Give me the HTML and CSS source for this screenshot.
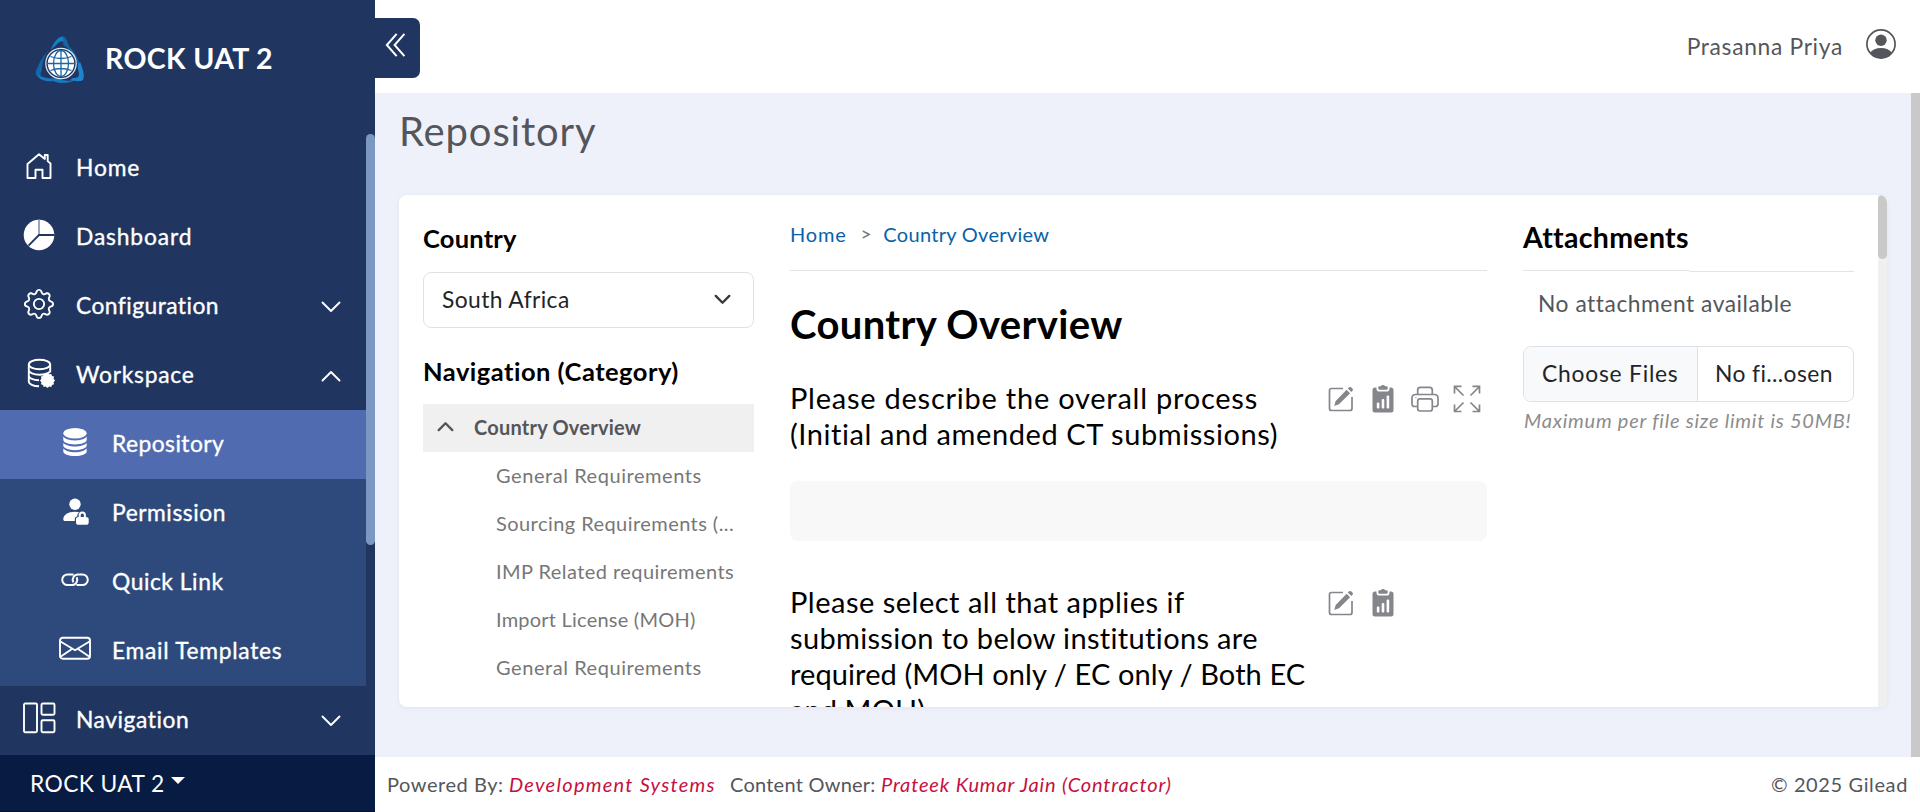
FILE: index.html
```html
<!DOCTYPE html>
<html lang="en">
<head>
<meta charset="utf-8">
<title>ROCK UAT 2 - Repository</title>
<link rel="stylesheet" href="styles.css">
</head>
<body>
<svg class="defs" aria-hidden="true">
  <symbol id="i-down" viewBox="0 0 20 12"><path d="M1.5 1.5 10 10l8.500-8.500" fill="none" stroke="currentColor" stroke-width="1.900" stroke-linecap="round" stroke-linejoin="round"/></symbol>
  <symbol id="i-down-bold" viewBox="0 0 20 12"><path d="M2 1.800 10 9.800l8-8" fill="none" stroke="currentColor" stroke-width="2.800" stroke-linecap="round" stroke-linejoin="round"/></symbol>
  <symbol id="i-edit" viewBox="0 0 28 28"><path d="M16 3.500H4.500a2 2 0 0 0-2 2v18a2 2 0 0 0 2 2h18.500a2 2 0 0 0 2-2V12" fill="none" stroke="currentColor" stroke-width="1.700"/><path d="M19.600 4.700l3.500 3.500L12 19.300 7.200 21l1.500-5zM20.800 3.500l1.300-1.200q1-.8 2 0l1.500 1.500q.8 1 0 2l-1.300 1.200z" fill="currentColor"/></symbol>
  <symbol id="i-clip" viewBox="0 0 28 28"><path fill-rule="evenodd" d="M7.500 2.500H6A2.500 2.500 0 0 0 3.500 5v20A2.500 2.500 0 0 0 6 27.500h16a2.500 2.500 0 0 0 2.500-2.500V5A2.500 2.500 0 0 0 22 2.500h-1.500v1.200a2.800 2.800 0 0 1-2.800 2.800h-7.400a2.800 2.800 0 0 1-2.800-2.800zM7.800 18.500q0-1 1-1h.6q1 0 1 1v4q0 1-1 1h-.6q-1 0-1-1zM12.700 15q0-1 1-1h.6q1 0 1 1v7.500q0 1-1 1h-.6q-1 0-1-1zM17.600 11.500q0-1 1-1h.6q1 0 1 1v11q0 1-1 1h-.6q-1 0-1-1z" fill="currentColor"/><path d="M9.300 2.300q0-1 1-1h1.500q.6-1.300 2.200-1.300t2.200 1.300h1.500q1 0 1 1v1.200q0 1.200-1.200 1.200h-7q-1.200 0-1.200-1.200z" fill="currentColor"/></symbol>
</svg>

<div class="app">
  <aside class="sidebar">
    <div class="brand">
      <svg class="logo" viewBox="0 0 48 48">
        <path d="M14.500 14C18 6 22 1 26 .5c4 0 5 5 6 9l-2-.5c-2-3.500-3.500-4-5.500-3.500-3 1-5 5-10 8.500z" fill="#1380cc"/>
        <path d="M26 .5c4 0 5 5 7.500 10.500C37 14 42 21 44 29l-3-1C39 19 33 12 27 9c1-3 .5-6-1-8.500z" fill="#1565a8"/>
        <path d="M44 26c3 7 5 14 3 18-3 2-9 1-13 0l3-2c5 0 6-1 6-4 0-3-2-6-1-10z" fill="#1f84cf"/>
        <path d="M14 13C9 17 6 27 6 34c-2 3-2 6 0 8-5-1-7-3-6-7 3-8 8-17 14-22z" fill="#1466ac"/>
        <path d="M1 38c7 5 15 5 21 4 7 4 14 3 19 1-7 5-18 5-24 2C10 46 2 44 1 38z" fill="#1778c0"/>
        <circle cx="25" cy="27.500" r="15.200" fill="#203660" stroke="#dbe7f3" stroke-width="1.200"/>
        <circle cx="25" cy="27.500" r="13.200" fill="#fff"/>
        <g fill="none" stroke="#1a66a6" stroke-width="1.300">
          <path d="M25 14.500v26M12 27.500h26M14.500 20.500q10.500 4 21 0M14.500 34.500q10.500-4 21 0"/>
          <ellipse cx="25" cy="27.500" rx="7.500" ry="13"/>
        </g>
      </svg>
      <span>ROCK UAT 2</span>
    </div>
    <div class="menu-wrap">
      <nav class="menu">
        <a class="item s12"><svg class="ico" viewBox="0 0 30 30"><path d="M15 3.200 3.500 13v14h8v-8.200h7V27h8V12.500l-2.800-2.400V4h-2.900v3.900z" fill="none" stroke="currentColor" stroke-width="1.900" stroke-linejoin="round"/></svg><span>Home</span></a>
        <a class="item s12"><svg class="ico" viewBox="0 0 30 30"><circle cx="15" cy="15" r="15.300" fill="#fff"/><path d="M15 -.5v15.500" stroke="#8f9cb5" stroke-width="1.800"/><path d="M30.500 15H15L4.500 25.700" fill="none" stroke="#203660" stroke-width="1.800"/></svg><span>Dashboard</span></a>
        <a class="item s8"><svg class="ico" viewBox="0 0 16 16" fill="currentColor"><path d="M8 4.754a3.246 3.246 0 1 0 0 6.492 3.246 3.246 0 0 0 0-6.492M5.754 8a2.246 2.246 0 1 1 4.492 0 2.246 2.246 0 0 1-4.492 0"/><path d="M9.796 1.343c-.527-1.790-3.065-1.790-3.592 0l-.094.319a.873.873 0 0 1-1.255.520l-.292-.160c-1.640-.892-3.433.902-2.540 2.541l.159.292a.873.873 0 0 1-.520 1.255l-.319.094c-1.790.527-1.790 3.065 0 3.592l.319.094a.873.873 0 0 1 .520 1.255l-.160.292c-.892 1.640.901 3.434 2.541 2.540l.292-.159a.873.873 0 0 1 1.255.520l.094.319c.527 1.790 3.065 1.790 3.592 0l.094-.319a.873.873 0 0 1 1.255-.520l.292.160c1.640.893 3.434-.902 2.540-2.541l-.159-.292a.873.873 0 0 1 .520-1.255l.319-.094c1.790-.527 1.790-3.065 0-3.592l-.319-.094a.873.873 0 0 1-.520-1.255l.160-.292c.893-1.640-.902-3.433-2.541-2.540l-.292.159a.873.873 0 0 1-1.255-.520zm-2.633.283c.246-.835 1.428-.835 1.674 0l.094.319a1.873 1.873 0 0 0 2.693 1.115l.291-.160c.764-.415 1.600.420 1.184 1.185l-.159.292a1.873 1.873 0 0 0 1.116 2.692l.318.094c.835.246.835 1.428 0 1.674l-.319.094a1.873 1.873 0 0 0-1.115 2.693l.160.291c.415.764-.420 1.600-1.185 1.184l-.291-.159a1.873 1.873 0 0 0-2.693 1.116l-.094.318c-.246.835-1.428.835-1.674 0l-.094-.319a1.873 1.873 0 0 0-2.692-1.115l-.292.160c-.764.415-1.600-.420-1.184-1.185l.159-.291A1.873 1.873 0 0 0 1.945 8.930l-.319-.094c-.835-.246-.835-1.428 0-1.674l.319-.094A1.873 1.873 0 0 0 3.060 4.377l-.160-.292c-.415-.764.420-1.600 1.185-1.184l.292.159a1.873 1.873 0 0 0 2.692-1.115z"/></svg><span>Configuration</span><svg class="arrow"><use href="#i-down"/></svg></a>
        <a class="item s11"><svg class="ico" viewBox="0 0 30 30"><g fill="none" stroke="currentColor" stroke-width="1.900"><ellipse cx="15.500" cy="6.500" rx="10.700" ry="4.700"/><path d="M4.800 6.500v17c0 2.500 4.500 4.700 10.200 4.700M26.200 6.500v8M4.800 12c0 2.700 4.800 4.700 10.700 4.700 4.500 0 8.300-1 10-2.700M4.800 17.800c0 2.500 4.500 4.300 10.200 4.400"/></g><path d="M23.500 15l1.700 1.300 2.100-.4.700 2 2 .7-.4 2.100L31 22.500l-1.400 1.700.4 2.100-2 .7-.7 2-2.100-.4-1.700 1.400-1.700-1.400-2.100.4-.7-2-2-.7.400-2.100-1.400-1.700 1.400-1.800-.4-2.100 2-.7.700-2 2.100.4z" fill="currentColor"/></svg><span>Workspace</span><svg class="arrow up"><use href="#i-down"/></svg></a>
        <div class="submenu">
          <a class="item active s8"><svg class="ico" viewBox="0 0 30 30" fill="currentColor"><ellipse cx="15" cy="6.200" rx="11.700" ry="5.200"/><path d="M3.300 9.500c2 2.600 6.500 3.900 11.700 3.900s9.700-1.300 11.700-3.900v3.300c0 2.700-5.200 4.700-11.700 4.700s-11.700-2-11.700-4.700zM3.300 16c2 2.300 6.500 3.500 11.700 3.500s9.700-1.200 11.700-3.500v2.600c0 2.600-5.200 4.600-11.700 4.600S3.300 21.200 3.300 18.600zM3.300 21.600c2 2.400 6.500 3.700 11.700 3.700s9.700-1.300 11.700-3.700v2.800C26.700 27 21.500 29 15 29S3.300 27 3.300 24.400z"/></svg><span>Repository</span></a>
          <a class="item s9"><svg class="ico" viewBox="0 0 30 30" fill="currentColor"><circle cx="15" cy="8.200" r="5.700"/><path d="M14.800 25H5.200c-1.300 0-1.900-.7-1.900-1.800 0-4.400 4.700-7.400 11.700-7.400 1.600 0 3 .2 4.300.5-1.500 1-2 2.300-2 4-1.600.3-2.500 1.500-2.500 2.800z"/><path fill-rule="evenodd" d="M18.700 21v-2a3.600 3.600 0 0 1 7.200 0v2c1.800 0 2.800.8 2.800 2.200v3.200c0 1.600-1 2.400-2.600 2.400h-7.600c-1.600 0-2.500-.8-2.500-2.400v-3.200c0-1.400.9-2.200 2.700-2.200zm2 0h3.200v-2a1.600 1.600 0 0 0-3.200 0z"/></svg><span>Permission</span></a>
          <a class="item s9"><svg class="ico" viewBox="0 0 30 30" fill="none" stroke="currentColor" stroke-width="2"><path d="M13.500 9.500H7.500a5.300 5.300 0 0 0 0 10.600H12a5.300 5.300 0 0 0 4.600-7.800M16.500 20.100h6a5.300 5.300 0 0 0 0-10.600H18a5.300 5.300 0 0 0-4.600 7.800"/></svg><span>Quick Link</span></a>
          <a class="item s10"><svg class="ico" viewBox="0 0 30 30" fill="none" stroke="currentColor" stroke-width="1.900"><rect x="0" y="3.700" width="30" height="21" rx="2.800"/><path d="M.5 7.500 15 16.200 29.500 7.500M.5 22.700l11.800-8M29.500 22.700l-11.800-8"/></svg><span>Email Templates</span></a>
        </div>
        <a class="item s9"><svg class="ico" viewBox="0 0 30 30" fill="none" stroke="currentColor" stroke-width="1.900"><rect x="0" y="0.500" width="13" height="28.800" rx="1.200"/><rect x="17.500" y="0.500" width="13" height="11.300" rx="1.200"/><rect x="17.500" y="17.300" width="13" height="12" rx="1.200"/></svg><span>Navigation</span><svg class="arrow"><use href="#i-down"/></svg></a>
      </nav>
      <div class="menu-scroll"><div class="menu-thumb"></div></div>
    </div>
    <div class="env"><span>ROCK UAT 2</span><i class="caret"></i></div>
  </aside>

  <div class="page">
    <header class="topbar">
      <button class="collapse"><svg viewBox="0 0 24 28"><path d="M12.700 1.800 2 14l10.700 12.200M21.200 1.800 10.500 14l10.700 12.200" fill="none" stroke="#fff" stroke-width="2.200"/></svg></button>
      <div class="user"><span>Prasanna Priya</span>
        <svg viewBox="0 0 30 30"><circle cx="15" cy="15" r="14.100" fill="none" stroke="currentColor" stroke-width="1.700"/><circle cx="15" cy="11.200" r="5.700" fill="currentColor"/><path d="M4 24c2.300-3.500 6-5 11-5s8.700 1.500 11 5c-2.800 3.300-6.500 5.200-11 5.200S6.800 27.300 4 24z" fill="currentColor"/></svg>
      </div>
    </header>

    <div class="body">
      <main class="content">
        <h1 class="page-title">Repository</h1>
        <section class="card">
          <div class="cols">
            <div class="left">
              <h2 class="label country">Country</h2>
              <div class="select"><span>South Africa</span><svg class="sel-arrow"><use href="#i-down-bold"/></svg></div>
              <h2 class="label navcat">Navigation (Category)</h2>
              <div class="cat"><svg class="cat-arrow"><use href="#i-down-bold"/></svg><span>Country Overview</span></div>
              <ul class="tree">
                <li>General Requirements</li>
                <li class="mid">Sourcing Requirements (...</li>
                <li class="mid">IMP Related requirements</li>
                <li class="narrow">Import License (MOH)</li>
                <li>General Requirements</li>
              </ul>
            </div>
            <div class="middle">
              <div class="crumbs"><a>Home</a><span class="sep">&gt;</span><a class="cur">Country Overview</a></div>
              <h2 class="title">Country Overview</h2>
              <div class="question">
                <p><span class="q1">Please describe the overall process</span><br><span class="q2">(Initial and amended CT submissions)</span></p>
                <div class="actions">
                  <svg><use href="#i-edit"/></svg>
                  <svg><use href="#i-clip"/></svg>
                  <svg viewBox="0 0 28 28" fill="none" stroke="currentColor" stroke-width="1.700"><path d="M6.700 9V5q0-2.700 2.700-2.700h9.200q2.700 0 2.700 2.700v4M6 21.500H3.700Q1 21.500 1 18.700v-5.500Q1 9.500 4.700 9.500h18.600q3.700 0 3.700 3.700v5.500q0 2.800-2.700 2.800H22"/><path d="M6.700 16q0-2.200 2.200-2.200h10.200q2.200 0 2.200 2.200v7.700q0 2.300-2.300 2.300H9q-2.300 0-2.300-2.300z"/><circle cx="4.900" cy="12.700" r=".6" fill="currentColor" stroke="none"/></svg>
                  <svg viewBox="0 0 28 28" fill="none" stroke="currentColor" stroke-width="1.700"><path d="M10.500 10.500 1.500 1.500M1.500 8.500V1.300h7M17.500 10.500l9-9M19.500 1.300h7v7.200M10.500 17.500l-9 9M1.500 19.500v7h7M17.500 17.500l9 9M19.500 26.500h7v-7"/></svg>
                </div>
              </div>
              <div class="answer"></div>
              <div class="question second">
                <p><span class="q3">Please select all that applies if</span><br><span class="q4">submission to below institutions are</span><br><span class="q5">required (MOH only / EC only / Both EC</span><br><span class="q5">and MOH)</span></p>
                <div class="actions">
                  <svg><use href="#i-edit"/></svg>
                  <svg><use href="#i-clip"/></svg>
                </div>
              </div>
            </div>
            <div class="right">
              <h2 class="att">Attachments</h2>
              <div class="rule"><i></i><i></i></div>
              <p class="none">No attachment available</p>
              <div class="file"><span class="choose">Choose Files</span><span class="chosen">No fi...osen</span></div>
              <p class="limit">Maximum per file size limit is 50MB!</p>
            </div>
          </div>
          <div class="card-scroll"><div class="card-thumb"></div></div>
        </section>
      </main>
      <div class="page-scroll"></div>
    </div>

    <footer class="footer">
      <span class="pb">Powered By:</span><em class="ds">Development Systems</em><span class="co">Content Owner:</span><em class="pk">Prateek Kumar Jain (Contractor)</em><span class="copy">© 2025 Gilead</span>
    </footer>
  </div>
</div>
</body>
</html>
```

FILE: styles.css
```css
* { box-sizing: border-box; }
body { margin: 0; font-family: Lato, "Open Sans", sans-serif; font-size: 22.800px; color: #54565b; background: #fff; overflow: hidden; }
h1, h2, p, ul { margin: 0; padding: 0; }
ul { list-style: none; }
svg { display: block; overflow: visible; flex: none; }
.defs { position: absolute; width: 0; height: 0; }
.app { display: flex; height: 812px; }

/* letter spacing steps for the menu */
.s8 { letter-spacing: .45px; }
.s9 { letter-spacing: .55px; }
.s10 { letter-spacing: .71px; }
.s11 { letter-spacing: .75px; }
.s12 { letter-spacing: .85px; }

/* sidebar */
.sidebar { width: 375px; flex: none; display: flex; flex-direction: column; background: #203660; color: #fff; }
.brand { height: 134px; display: flex; align-items: flex-start; padding: 36px 0 0 36px; gap: 21px; font-size: 28.500px; font-weight: 700; letter-spacing: .35px; }
.brand span { line-height: 44px; }
.logo { width: 48px; height: 48px; }
.menu-wrap { display: flex; height: 621px; }
.menu { width: 366px; }
.item { height: 69px; display: flex; align-items: center; padding: 0 25px 5px 24px; color: #fff; -webkit-text-stroke: .35px #fff; }
.item span { flex: 1; padding: 2px 0 0 22px; line-height: 28px; }
.ico { width: 30px; height: 30px; }
.arrow { width: 20px; height: 12px; margin-top: 5px; }
.up { transform: rotate(180deg); }
.submenu { background: #2e4a7c; }
.submenu .item { padding-left: 60px; }
.submenu .active { background: #516bb0; }
.menu-scroll { width: 9px; }
.menu-thumb { height: 411px; border-radius: 4.500px; background: #7b98c3; }
.env { flex: 1; display: flex; align-items: center; padding: 0 0 1px 30px; background: #071b43; border-bottom: 1px solid #04102c; letter-spacing: .4px; }
.caret { margin: -5px 0 0 6px; border: 7px solid transparent; border-top-color: #fff; border-bottom: 0; }

/* top bar */
.page { flex: 1; display: flex; flex-direction: column; min-width: 0; }
.topbar { height: 93px; display: flex; justify-content: space-between; align-items: flex-start; }
.collapse { width: 45px; height: 60px; margin-top: 18px; padding: 0 0 0 10px; border: 0; border-radius: 0 7px 7px 0; background: #203660; }
.collapse svg { width: 22px; height: 26px; margin-top: -6px; }
.user { display: flex; gap: 23px; padding: 29px 24px 0 0; letter-spacing: .68px; }
.user span { line-height: 35px; }
.user svg { width: 30px; height: 30px; }

/* content area */
.body { height: 664px; display: flex; background: #eef1fa; }
.content { flex: 1; padding-left: 24px; }
.page-title { height: 102px; padding-top: 15px; font-size: 40px; line-height: 47px; font-weight: 400; letter-spacing: .85px; }
.page-scroll { width: 9px; background: #c9c9c9; }
.card { width: 1488px; height: 512px; display: flex; overflow: hidden; border-radius: 8px; background: #fff; box-shadow: 0 1px 5px rgba(0, 0, 0, .06); }
.cols { width: 1479px; display: flex; padding-left: 24px; }
.card-scroll { width: 9px; background: #f0f0f0; }
.card-thumb { height: 64px; border-radius: 4.500px; background: #c9c9c9; }

/* category column */
.left { width: 331px; margin-right: 36px; }
.label { font-size: 25.500px; line-height: 30px; font-weight: 700; color: #000; }
.country { padding-top: 28px; letter-spacing: .2px; }
.select { height: 56px; margin-top: 19px; display: flex; justify-content: space-between; align-items: center; padding: 0 22px 3px 18px; border: 1px solid #dee2e6; border-radius: 8px; color: #212529; letter-spacing: .4px; }
.sel-arrow { width: 17px; height: 11px; margin-top: 2px; color: #343a40; }
.navcat { padding-top: 28px; letter-spacing: .48px; }
.cat { height: 48px; margin-top: 18px; display: flex; align-items: center; gap: 20px; padding: 0 0 2px 14px; background: #f0f0f0; font-size: 20px; font-weight: 700; letter-spacing: .22px; }
.cat-arrow { width: 17px; height: 11px; transform: rotate(180deg); margin-top: -2px; }
.tree li { height: 48px; padding-left: 73px; font-size: 20px; line-height: 46px; color: #777; letter-spacing: .56px; white-space: nowrap; }
.tree .mid { letter-spacing: .44px; }
.tree .narrow { letter-spacing: .22px; }

/* question column */
.middle { width: 697px; margin-right: 36px; }
.crumbs { height: 76px; display: flex; padding-top: 27px; border-bottom: 1px solid #e2e3e4; font-size: 20px; line-height: 24px; color: #0862a8; letter-spacing: .8px; }
.crumbs .cur { letter-spacing: .3px; }
.sep { margin: 0 11px 0 14px; font-size: 19px; color: #6c757d; }
.title { padding-top: 29px; font-size: 40px; line-height: 48px; font-weight: 700; color: #000; letter-spacing: .35px; }
.question { display: flex; align-items: flex-start; height: 133px; padding-top: 32px; color: #000; font-size: 29px; line-height: 36px; }
.question p { width: 537px; white-space: nowrap; }
.q1 { letter-spacing: .76px; }
.q2 { letter-spacing: .58px; }
.q3 { letter-spacing: .5px; }
.q4 { letter-spacing: .34px; }
.q5 { letter-spacing: .09px; }
.actions { display: flex; gap: 14px; padding-top: 5px; color: #85868b; }
.actions svg { width: 28px; height: 28px; }
.answer { height: 60px; border-radius: 8px; background: #f8f8f8; }
.second { height: auto; padding-top: 43px; }

/* attachments column */
.right { width: 331px; }
.att { height: 75px; padding-top: 26px; font-size: 28.500px; line-height: 32px; font-weight: 700; color: #000; letter-spacing: .3px; }
.rule { display: flex; height: 2px; }
.rule i { flex: 1; border-top: 1px solid #e2e3e4; }
.rule i + i { margin-top: 1px; }
.none { padding: 17px 0 0 15px; line-height: 28px; letter-spacing: .53px; }
.file { display: flex; height: 56px; margin-top: 29px; border: 1px solid #dee2e6; border-radius: 8px; overflow: hidden; color: #212529; line-height: 52px; white-space: nowrap; }
.choose { width: 174px; padding-left: 18px; background: #f8f9fa; border-right: 1px solid #dee2e6; letter-spacing: .78px; }
.chosen { padding-left: 17px; letter-spacing: .4px; }
.limit { padding-left: 1px; font-size: 20px; line-height: 36px; font-style: italic; color: #8c8c8c; letter-spacing: .76px; white-space: nowrap; }

/* footer */
.footer { flex: 1; display: flex; padding: 0 12px; font-size: 20px; line-height: 54px; white-space: nowrap; }
.footer em { color: #c5103f; }
.pb { width: 122px; letter-spacing: .55px; }
.ds { width: 221px; letter-spacing: 1.270px; }
.co { width: 151px; letter-spacing: .24px; }
.pk { letter-spacing: .87px; }
.copy { margin-left: auto; letter-spacing: .62px; }
```
